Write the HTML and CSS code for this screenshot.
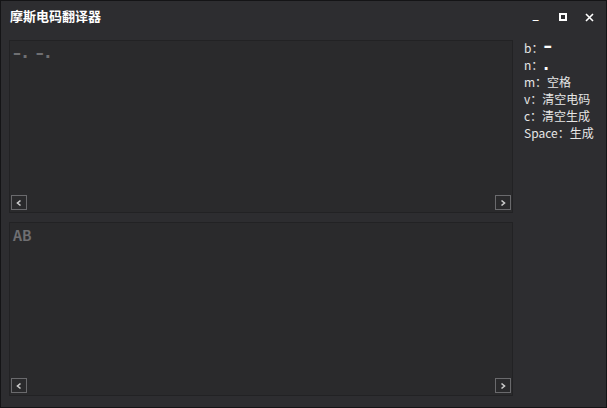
FILE: index.html
```html
<!DOCTYPE html>
<html lang="zh">
<head>
<meta charset="utf-8">
<title>摩斯电码翻译器</title>
<link rel="stylesheet" href="styles.css">
</head>
<body>
<div class="window">
  <div class="titlebar">
    <div class="title">摩斯电码翻译器</div>
    <div class="controls">
      <span class="ctl min">_</span>
      <span class="ctl max"><svg width="8" height="8" viewBox="0 0 8 8"><rect x="1" y="1" width="6" height="6" fill="none" stroke="#fff" stroke-width="2"/></svg></span>
      <span class="ctl close"><svg width="9" height="9" viewBox="0 0 9 9"><path d="M1 1L8 8M8 1L1 8" stroke="#fff" stroke-width="1.6"/></svg></span>
    </div>
  </div>
  <div class="content">
    <div class="boxes">
      <div class="textbox">
        <div class="text morse">–. –.</div>
        <div class="hscroll">
          <span class="sbtn"><svg width="8" height="8" viewBox="0 0 8 8"><path d="M5.5 1.5L2.5 4L5.5 6.5" fill="none" stroke="#ccc" stroke-width="1.6"/></svg></span>
          <span class="sbtn"><svg width="8" height="8" viewBox="0 0 8 8"><path d="M2.5 1.5L5.5 4L2.5 6.5" fill="none" stroke="#ccc" stroke-width="1.6"/></svg></span>
        </div>
      </div>
      <div class="textbox second">
        <div class="text plain">AB</div>
        <div class="hscroll">
          <span class="sbtn"><svg width="8" height="8" viewBox="0 0 8 8"><path d="M5.5 1.5L2.5 4L5.5 6.5" fill="none" stroke="#ccc" stroke-width="1.6"/></svg></span>
          <span class="sbtn"><svg width="8" height="8" viewBox="0 0 8 8"><path d="M2.5 1.5L5.5 4L2.5 6.5" fill="none" stroke="#ccc" stroke-width="1.6"/></svg></span>
        </div>
      </div>
    </div>
    <ul class="keys">
      <li>b：<b class="sym dash">–</b></li>
      <li>n：<b class="sym">.</b></li>
      <li>m：空格</li>
      <li>v：清空电码</li>
      <li>c：清空生成</li>
      <li>Space：生成</li>
    </ul>
  </div>
</div>
</body>
</html>
```
FILE: styles.css
```css
* { box-sizing: border-box; }
html, body { margin: 0; padding: 0; }
body {
  width: 607px;
  height: 408px;
  background: #2d2d30;
  font-family: "Microsoft YaHei", "Noto Sans CJK SC", "Noto Sans", sans-serif;
  overflow: hidden;
}
.window {
  width: 607px;
  height: 408px;
  border: 1px solid #141416;
  background: #2d2d30;
  display: flex;
  flex-direction: column;
}
.titlebar {
  height: 39px;
  display: flex;
  align-items: flex-start;
  justify-content: space-between;
  padding: 5px 0 0 9px;
}
.title {
  color: #fff;
  font-weight: bold;
  font-size: 13px;
  line-height: 20px;
}
.controls {
  display: flex;
  align-items: center;
  height: 20px;
  margin-top: 1px;
}
.ctl {
  width: 27px;
  display: flex;
  justify-content: center;
  align-items: center;
  color: #fff;
  font-size: 11px;
  font-weight: bold;
  height: 20px;
}
.ctl.min { line-height: 14px; align-items: flex-start; }
.ctl.close { margin-right: 3px; }
.content {
  flex: 1;
  display: flex;
  padding: 0 0 9px 8px;
}
.boxes {
  width: 504px;
  display: flex;
  flex-direction: column;
  gap: 9px;
}
.textbox {
  height: 173px;
  background: #2a2a2c;
  border: 1px solid #222224;
  display: flex;
  flex-direction: column;
  justify-content: space-between;
}
.textbox.second { height: 174px; }
.text {
  color: #6f6f72;
  font-weight: bold;
  font-size: 14px;
  padding: 2px 0 0 3px;
  line-height: 20px;
}
.text.morse {
  font-family: "DejaVu Sans", sans-serif;
  font-size: 16px;
  letter-spacing: 1px;
  padding-left: 3px;
}
.hscroll {
  display: flex;
  justify-content: space-between;
  padding: 0 1px;
  height: 17px;
}
.sbtn {
  width: 16px;
  height: 15px;
  border: 1px solid #6a6a6d;
  display: flex;
  align-items: center;
  justify-content: center;
  background: #2a2a2c;
}
.keys {
  list-style: none;
  margin: -1px 0 0 0;
  padding: 0 0 0 11px;
  color: #e6e6e6;
  font-size: 12px;
  line-height: 17px;
}
.keys li { white-space: nowrap; height: 17px; }
.keys .sym {
  color: #fff;
  font-family: "DejaVu Sans", sans-serif;
  font-weight: bold;
  font-size: 15px;
  line-height: 0;
}
.keys .sym.dash {
  font-size: 17px;
  position: relative;
  top: -1px;
}
```
